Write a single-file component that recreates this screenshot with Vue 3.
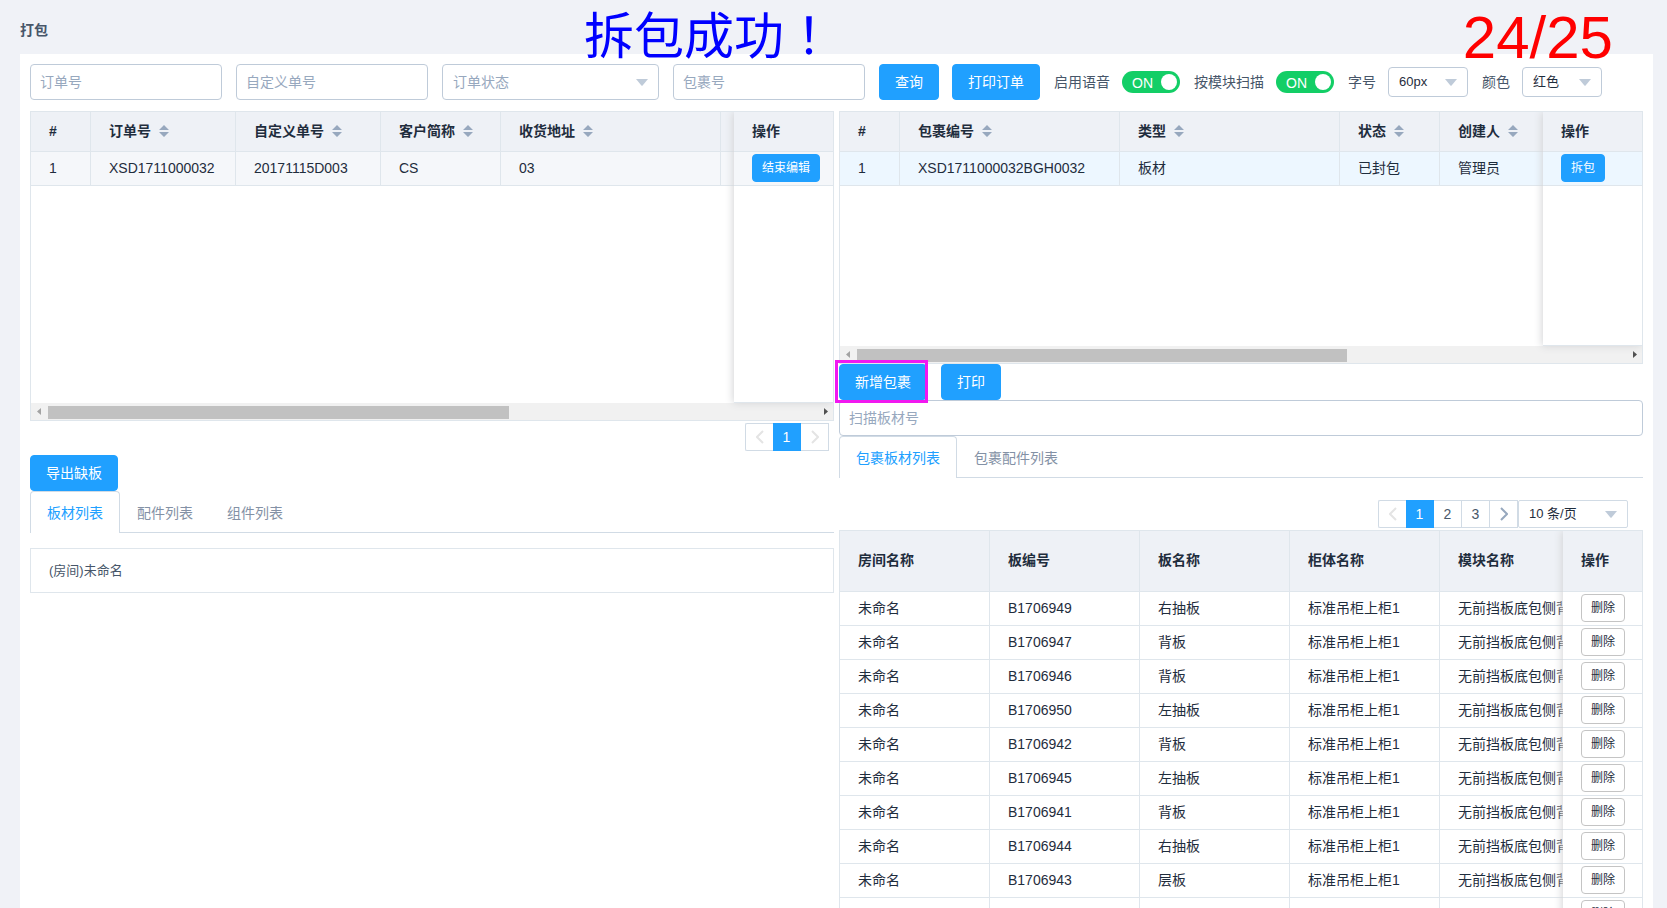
<script setup>
import { ref } from 'vue'

const voice = ref(true)
const byModule = ref(true)
const fontSize = ref('60px')
const color = ref('红色')
const pageSize = ref('10 条/页')

const orderCols = [
  { label: '#', key: 'no', w: 60 },
  { label: '订单号', key: 'code', w: 145, sort: true },
  { label: '自定义单号', key: 'custom', w: 145, sort: true },
  { label: '客户简称', key: 'client', w: 120, sort: true },
  { label: '收货地址', key: 'address', w: 220, sort: true },
  { label: '', key: 'spare', w: 400 }
]
const orders = [
  { no: 1, code: 'XSD1711000032', custom: '20171115D003', client: 'CS', address: '03' }
]

const packCols = [
  { label: '#', key: 'no', w: 60 },
  { label: '包裹编号', key: 'code', w: 220, sort: true },
  { label: '类型', key: 'type', w: 220, sort: true },
  { label: '状态', key: 'state', w: 100, sort: true },
  { label: '创建人', key: 'creator', w: 400, sort: true }
]
const packs = [
  { no: 1, code: 'XSD1711000032BGH0032', type: '板材', state: '已封包', creator: '管理员' }
]

const boardCols = [
  { label: '房间名称', key: 'room', w: 150 },
  { label: '板编号', key: 'code', w: 150 },
  { label: '板名称', key: 'name', w: 150 },
  { label: '柜体名称', key: 'cabinet', w: 150 },
  { label: '模块名称', key: 'module', w: 400 }
]
const boards = [
  ['B1706949', '右抽板'],
  ['B1706947', '背板'],
  ['B1706946', '背板'],
  ['B1706950', '左抽板'],
  ['B1706942', '背板'],
  ['B1706945', '左抽板'],
  ['B1706941', '背板'],
  ['B1706944', '右抽板'],
  ['B1706943', '层板']
].map(([code, name]) => ({
  room: '未命名',
  code,
  name,
  cabinet: '标准吊柜上柜1',
  module: '无前挡板底包侧背板'
}))
boards.push({ code: '' })

const total = (cols) => cols.reduce((sum, c) => sum + c.w, 0) + 'px'
</script>

<template>
  <div class="page">
    <header class="head">
      <h1>打包</h1>
      <p class="notice">拆包成功<span class="mark">！</span></p>
      <p class="count">24/25</p>
    </header>

    <main class="panel">
      <form class="toolbar" @submit.prevent>
        <input class="field" type="text" placeholder="订单号" aria-label="订单号">
        <input class="field" type="text" placeholder="自定义单号" aria-label="自定义单号">
        <span class="pick wide">
          <select aria-label="订单状态"><option>订单状态</option></select>
          <svg class="caret" viewBox="0 0 12 7"><path d="M0 0h12L6.600 6.500q-.6.6-1.200 0z" /></svg>
        </span>
        <input class="field" type="text" placeholder="包裹号" aria-label="包裹号">
        <span class="pair">
          <button class="btn" type="submit">查询</button>
          <button class="btn" type="button">打印订单</button>
        </span>
        <label class="option">启用语音
          <span class="switch"><input v-model="voice" type="checkbox"><b>ON</b></span>
        </label>
        <label class="option">按模块扫描
          <span class="switch"><input v-model="byModule" type="checkbox"><b>ON</b></span>
        </label>
        <label class="option">字号
          <span class="pick small">
            <select v-model="fontSize"><option>60px</option></select>
            <svg class="caret" viewBox="0 0 12 7"><path d="M0 0h12L6.600 6.500q-.6.6-1.200 0z" /></svg>
          </span>
        </label>
        <label class="option">颜色
          <span class="pick small">
            <select v-model="color"><option>红色</option></select>
            <svg class="caret" viewBox="0 0 12 7"><path d="M0 0h12L6.600 6.500q-.6.6-1.200 0z" /></svg>
          </span>
        </label>
      </form>

      <div class="columns">
        <section class="col">
          <div class="grid orders">
            <div class="body">
              <div class="scroll">
                <table :style="{ width: total(orderCols) }">
                  <thead>
                    <tr>
                      <th v-for="c in orderCols" :key="c.key" :style="{ width: c.w + 'px' }">{{ c.label }}<svg v-if="c.sort" class="sort" viewBox="0 0 10 12"><path d="M5 0l5 5H0zM0 7h10l-5 5z" /></svg></th>
                    </tr>
                  </thead>
                  <tbody>
                    <tr v-for="r in orders" :key="r.no" class="hovered">
                      <td v-for="c in orderCols" :key="c.key">{{ r[c.key] }}</td>
                    </tr>
                  </tbody>
                </table>
              </div>
              <div class="fixed">
                <table>
                  <thead><tr><th>操作</th></tr></thead>
                  <tbody>
                    <tr v-for="r in orders" :key="r.no" class="hovered">
                      <td><button class="btn mini" type="button">结束编辑</button></td>
                    </tr>
                  </tbody>
                </table>
              </div>
            </div>
            <div class="bar">
              <svg class="arrow off" viewBox="0 0 17 17"><path d="M10 5v7L6 8.500z" /></svg>
              <div class="track"><div class="thumb t-orders"></div></div>
              <svg class="arrow" viewBox="0 0 17 17"><path d="M8 5v7l4-3.500z" /></svg>
            </div>
          </div>

          <nav class="pager first" aria-label="订单分页">
            <button type="button" class="off" aria-label="上一页"><svg viewBox="0 0 8 14"><path d="M7 1L1 7l6 6" /></svg></button>
            <button type="button" class="on">1</button>
            <button type="button" class="off" aria-label="下一页"><svg viewBox="0 0 8 14"><path d="M1 1l6 6-6 6" /></svg></button>
          </nav>

          <div class="export"><button class="btn" type="button">导出缺板</button></div>

          <div class="tabs">
            <button type="button" class="tab active">板材列表</button>
            <button type="button" class="tab">配件列表</button>
            <button type="button" class="tab">组件列表</button>
          </div>
          <div class="room">(房间)未命名</div>
        </section>

        <section class="col">
          <div class="grid packs">
            <div class="body">
              <div class="scroll">
                <table :style="{ width: total(packCols) }">
                  <thead>
                    <tr>
                      <th v-for="c in packCols" :key="c.key" :style="{ width: c.w + 'px' }">{{ c.label }}<svg v-if="c.sort" class="sort" viewBox="0 0 10 12"><path d="M5 0l5 5H0zM0 7h10l-5 5z" /></svg></th>
                    </tr>
                  </thead>
                  <tbody>
                    <tr v-for="r in packs" :key="r.no" class="current">
                      <td v-for="c in packCols" :key="c.key">{{ r[c.key] }}</td>
                    </tr>
                  </tbody>
                </table>
              </div>
              <div class="fixed">
                <table>
                  <thead><tr><th>操作</th></tr></thead>
                  <tbody>
                    <tr v-for="r in packs" :key="r.no" class="current">
                      <td><button class="btn mini" type="button">拆包</button></td>
                    </tr>
                  </tbody>
                </table>
              </div>
            </div>
            <div class="bar">
              <svg class="arrow off" viewBox="0 0 17 17"><path d="M10 5v7L6 8.500z" /></svg>
              <div class="track"><div class="thumb t-packs"></div></div>
              <svg class="arrow" viewBox="0 0 17 17"><path d="M8 5v7l4-3.500z" /></svg>
            </div>
          </div>

          <div class="actions">
            <button class="btn marked" type="button">新增包裹</button>
            <button class="btn" type="button">打印</button>
          </div>
          <input class="field scan" type="text" placeholder="扫描板材号" aria-label="扫描板材号">

          <div class="tabs">
            <button type="button" class="tab active">包裹板材列表</button>
            <button type="button" class="tab">包裹配件列表</button>
          </div>

          <nav class="pager second" aria-label="板材分页">
            <button type="button" class="off" aria-label="上一页"><svg viewBox="0 0 8 14"><path d="M7 1L1 7l6 6" /></svg></button>
            <button type="button" class="on">1</button>
            <button type="button">2</button>
            <button type="button">3</button>
            <button type="button" aria-label="下一页"><svg viewBox="0 0 8 14"><path d="M1 1l6 6-6 6" /></svg></button>
            <span class="pick size">
              <select v-model="pageSize" aria-label="每页条数"><option>10 条/页</option></select>
              <svg class="caret" viewBox="0 0 12 7"><path d="M0 0h12L6.600 6.500q-.6.6-1.200 0z" /></svg>
            </span>
          </nav>

          <div class="grid boards">
            <div class="body">
              <div class="scroll">
                <table :style="{ width: total(boardCols) }">
                  <thead>
                    <tr>
                      <th v-for="c in boardCols" :key="c.key" :style="{ width: c.w + 'px' }">{{ c.label }}</th>
                    </tr>
                  </thead>
                  <tbody>
                    <tr v-for="r in boards" :key="r.code">
                      <td v-for="c in boardCols" :key="c.key">{{ r[c.key] }}</td>
                    </tr>
                  </tbody>
                </table>
              </div>
              <div class="fixed narrow">
                <table>
                  <thead><tr><th>操作</th></tr></thead>
                  <tbody>
                    <tr v-for="r in boards" :key="r.code">
                      <td><button class="btn mini plain" type="button">删除</button></td>
                    </tr>
                  </tbody>
                </table>
              </div>
            </div>
          </div>
        </section>
      </div>
    </main>
  </div>
</template>

<style>
body {
  margin: 0;
  background: #f0f2f7;
}
</style>

<style scoped>
.page,
.page * {
  box-sizing: border-box;
}
.page {
  display: flex;
  flex-direction: column;
  height: 100vh;
  padding: 0 14px 0 20px;
  overflow: hidden;
  background: #f0f2f7;
  color: #475669;
  font: 14px/20px "Liberation Sans", "Noto Sans CJK SC", sans-serif;
}
button,
input,
select {
  font: inherit;
  color: inherit;
  margin: 0;
}
.head {
  position: relative;
  display: flex;
  align-items: center;
  height: 54px;
  padding-top: 6px;
  flex: none;
}
h1 {
  margin: 0;
  font-size: 14px;
  line-height: 20px;
  font-weight: 700;
}
.notice,
.count {
  position: absolute;
  margin: 0;
  white-space: nowrap;
  pointer-events: none;
}
.notice {
  left: 564px;
  top: 2px;
  font-size: 50px;
  line-height: 60px;
  color: #00f;
}
.mark {
  font-family: "Noto Sans CJK TC", sans-serif;
}
.count {
  right: 40px;
  top: 4px;
  font-size: 60px;
  line-height: 68px;
  color: #f00;
}
.panel {
  flex: 1 0 auto;
  padding: 10px;
  background: #fff;
}
.toolbar {
  display: flex;
  align-items: center;
  gap: 14px;
  height: 36px;
  margin-bottom: 11px;
}
.field {
  width: 192px;
  height: 36px;
  padding: 0 9px;
  border: 1px solid #bfcbd9;
  border-radius: 4px;
  background: #fff;
  outline: none;
}
.field::placeholder {
  color: #97a8be;
  opacity: 1;
}
.pick {
  position: relative;
  display: inline-flex;
}
.pick select {
  width: 100%;
  height: 100%;
  padding: 0 10px;
  border: 1px solid #bfcbd9;
  border-radius: 4px;
  background: #fff;
  appearance: none;
  outline: none;
}
.caret {
  position: absolute;
  top: 50%;
  right: 11px;
  width: 12px;
  height: 7px;
  margin-top: -3px;
  fill: #bfcbd9;
  pointer-events: none;
}
.wide {
  width: 217px;
  height: 36px;
}
.wide select {
  color: #97a8be;
}
.small {
  width: 80px;
  height: 30px;
}
.small select,
.size select {
  font-size: 13px;
  color: #1f2d3d;
}
.pair {
  display: flex;
  gap: 13px;
}
.btn {
  height: 36px;
  padding: 0 15px;
  border: 1px solid #20a0ff;
  border-radius: 4px;
  background: #20a0ff;
  color: #fff;
  white-space: nowrap;
  cursor: pointer;
}
.mini {
  display: block;
  height: 28px;
  padding: 0 9px;
  font-size: 12px;
  line-height: 16px;
}
.plain {
  border-color: #c4c4c4;
  background: #fff;
  color: #1f2d3d;
}
.option {
  display: flex;
  align-items: center;
  gap: 12px;
  white-space: nowrap;
}
.switch {
  position: relative;
  display: inline-flex;
  width: 58px;
  height: 22px;
}
.switch input {
  width: 58px;
  height: 22px;
  border-radius: 11px;
  background: #13ce66;
  appearance: none;
  cursor: pointer;
}
.switch input::after {
  content: "";
  position: absolute;
  top: 3px;
  right: 3px;
  width: 16px;
  height: 16px;
  border-radius: 8px;
  background: #fff;
}
.switch b {
  position: absolute;
  left: 10px;
  top: 2px;
  font-weight: 400;
  color: #fff;
  pointer-events: none;
}
.columns {
  display: grid;
  grid-template-columns: minmax(0, 1fr) minmax(0, 1fr);
  gap: 5px;
}
.grid {
  display: flex;
  flex-direction: column;
  border: 1px solid #dfe6ec;
  background: #fff;
}
.orders {
  height: 310px;
}
.packs {
  height: 253px;
}
.body {
  display: flex;
  flex: 1;
  overflow: hidden;
}
.orders .body,
.packs .body {
  overflow: visible;
}
.scroll {
  flex: 1;
  min-width: 0;
  overflow: hidden;
}
.fixed {
  position: relative;
  z-index: 1;
  width: 99px;
  flex: none;
  border-bottom: 1px solid #dfe6ec;
  background: #fff;
  box-shadow: -1px 0 8px #d3d4d6;
  clip-path: inset(0 0 -8px -12px);
}
.narrow {
  width: 79px;
}
table {
  width: 100%;
  table-layout: fixed;
  border-collapse: separate;
  border-spacing: 0;
  color: #1f2d3d;
}
th,
td {
  height: 34px;
  padding: 0 0 1px 18px;
  border-right: 1px solid #dfe6ec;
  border-bottom: 1px solid #dfe6ec;
  text-align: left;
  white-space: nowrap;
  overflow: hidden;
}
th {
  height: 40px;
  padding-bottom: 2px;
  background: #eef1f6;
  font-weight: 700;
}
.boards th {
  height: 61px;
}
.fixed th,
.fixed td {
  border-right: 0;
}
.hovered td {
  background: #f5f7fa;
}
.current td {
  background: #edf7ff;
}
.sort {
  width: 10px;
  height: 12px;
  margin-left: 8px;
  vertical-align: -1px;
  fill: #97a8be;
}
.bar {
  display: flex;
  height: 17px;
  flex: none;
  background: #f1f1f1;
}
.arrow {
  width: 17px;
  height: 17px;
  flex: none;
  fill: #505050;
}
.arrow.off {
  fill: #a3a3a3;
}
.track {
  flex: 1;
  padding: 3px 0 1px;
}
.thumb {
  height: 13px;
  background: #c1c1c1;
}
.t-orders {
  width: 60%;
}
.t-packs {
  width: 63.8%;
}
.pager {
  display: flex;
  justify-content: flex-end;
  height: 28px;
}
.first {
  margin: 2px 5px 4px 0;
}
.second {
  margin: 22px 15px 2px 0;
}
.pager button {
  display: flex;
  align-items: center;
  justify-content: center;
  width: 28px;
  height: 28px;
  padding: 0;
  border: 1px solid #d1dbe5;
  border-left: 0;
  background: #fff;
  font-size: 14px;
  color: #48576a;
}
.pager button:first-child {
  border-left: 1px solid #d1dbe5;
  border-right: 0;
  border-radius: 2px 0 0 2px;
}
.pager .on {
  border-color: #20a0ff;
  background: #20a0ff;
  color: #fff;
}
.pager svg:not(.caret) {
  width: 8px;
  height: 14px;
  fill: none;
  stroke: #97a8be;
  stroke-width: 2;
}
.pager .off svg:not(.caret) {
  stroke: #e4e4e4;
}
.size {
  width: 110px;
  height: 28px;
}
.size select {
  border-color: #d1dbe5;
  border-radius: 2px;
}
.export {
  display: flex;
}
.tabs {
  display: flex;
  height: 42px;
  border-bottom: 1px solid #d1dbe5;
}
.tab {
  height: 42px;
  padding: 0 16px;
  border: 1px solid transparent;
  border-bottom: 0;
  background: none;
  color: #8391a5;
  cursor: pointer;
}
.tab.active {
  border-color: #d1dbe5;
  border-radius: 4px 4px 0 0;
  background: #fff;
  color: #20a0ff;
}
.room {
  margin-top: 15px;
  padding: 12px 18px;
  border: 1px solid #dfe6ec;
  font-size: 13px;
  line-height: 19px;
}
.actions {
  display: flex;
  gap: 14px;
  height: 36px;
}
.marked {
  position: relative;
  z-index: 2;
}
.marked::after {
  content: "";
  position: absolute;
  inset: -5px -2px -4px -5px;
  border: 3px solid #f118f0;
}
.scan {
  display: block;
  width: 100%;
}
</style>
